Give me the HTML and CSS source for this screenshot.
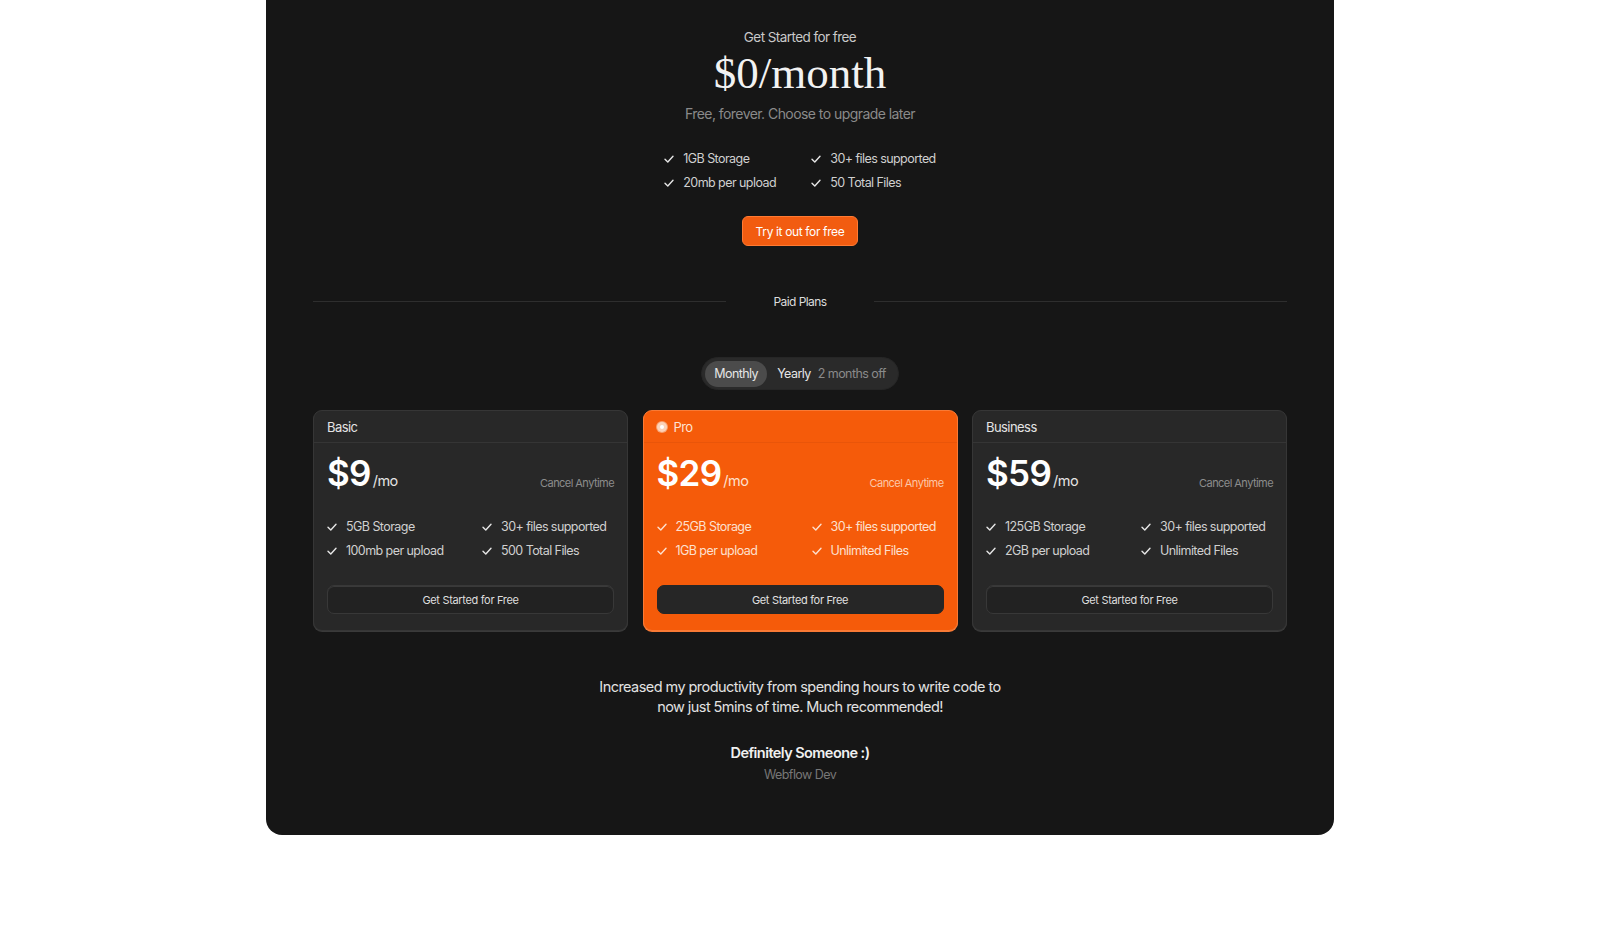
FILE: index.html
```html
<!DOCTYPE html>
<html lang="en">
<head>
<meta charset="utf-8">
<title>Pricing</title>
<link rel="stylesheet" href="styles.css">
</head>
<body>
<main class="panel">
  <section class="hero">
    <p class="eyebrow">Get Started for free</p>
    <h1 class="big-price">$0/month</h1>
    <p class="sub">Free, forever. Choose to upgrade later</p>
    <ul class="features free">
      <li><svg class="chk" viewBox="0 0 10 10"><polyline points="1,5.2 3.8,8 9,2.2"/></svg>1GB Storage</li>
      <li><svg class="chk" viewBox="0 0 10 10"><polyline points="1,5.2 3.8,8 9,2.2"/></svg>30+ files supported</li>
      <li><svg class="chk" viewBox="0 0 10 10"><polyline points="1,5.2 3.8,8 9,2.2"/></svg>20mb per upload</li>
      <li><svg class="chk" viewBox="0 0 10 10"><polyline points="1,5.2 3.8,8 9,2.2"/></svg>50 Total Files</li>
    </ul>
    <button class="cta">Try it out for free</button>
  </section>

  <div class="divider"><span class="line"></span><span class="divider-label">Paid Plans</span><span class="line"></span></div>

  <div class="toggle-wrap">
    <div class="toggle">
      <span class="opt active">Monthly</span>
      <span class="opt">Yearly <span class="muted">2 months off</span></span>
    </div>
  </div>

  <div class="cards">
    <article class="card">
      <header class="card-head">Basic</header>
      <div class="price-row"><span class="amount">$9</span><span class="per">/mo</span><span class="cancel">Cancel Anytime</span></div>
      <ul class="features">
        <li><svg class="chk" viewBox="0 0 10 10"><polyline points="1,5.2 3.8,8 9,2.2"/></svg>5GB Storage</li>
        <li><svg class="chk" viewBox="0 0 10 10"><polyline points="1,5.2 3.8,8 9,2.2"/></svg>30+ files supported</li>
        <li><svg class="chk" viewBox="0 0 10 10"><polyline points="1,5.2 3.8,8 9,2.2"/></svg>100mb per upload</li>
        <li><svg class="chk" viewBox="0 0 10 10"><polyline points="1,5.2 3.8,8 9,2.2"/></svg>500 Total Files</li>
      </ul>
      <button class="card-btn">Get Started for Free</button>
    </article>
    <article class="card pro">
      <header class="card-head"><span class="dot"></span>Pro</header>
      <div class="price-row"><span class="amount">$29</span><span class="per">/mo</span><span class="cancel">Cancel Anytime</span></div>
      <ul class="features">
        <li><svg class="chk" viewBox="0 0 10 10"><polyline points="1,5.2 3.8,8 9,2.2"/></svg>25GB Storage</li>
        <li><svg class="chk" viewBox="0 0 10 10"><polyline points="1,5.2 3.8,8 9,2.2"/></svg>30+ files supported</li>
        <li><svg class="chk" viewBox="0 0 10 10"><polyline points="1,5.2 3.8,8 9,2.2"/></svg>1GB per upload</li>
        <li><svg class="chk" viewBox="0 0 10 10"><polyline points="1,5.2 3.8,8 9,2.2"/></svg>Unlimited Files</li>
      </ul>
      <button class="card-btn">Get Started for Free</button>
    </article>
    <article class="card">
      <header class="card-head">Business</header>
      <div class="price-row"><span class="amount">$59</span><span class="per">/mo</span><span class="cancel">Cancel Anytime</span></div>
      <ul class="features">
        <li><svg class="chk" viewBox="0 0 10 10"><polyline points="1,5.2 3.8,8 9,2.2"/></svg>125GB Storage</li>
        <li><svg class="chk" viewBox="0 0 10 10"><polyline points="1,5.2 3.8,8 9,2.2"/></svg>30+ files supported</li>
        <li><svg class="chk" viewBox="0 0 10 10"><polyline points="1,5.2 3.8,8 9,2.2"/></svg>2GB per upload</li>
        <li><svg class="chk" viewBox="0 0 10 10"><polyline points="1,5.2 3.8,8 9,2.2"/></svg>Unlimited Files</li>
      </ul>
      <button class="card-btn">Get Started for Free</button>
    </article>
  </div>

  <section class="testimonial">
    <p class="quote">Increased my productivity from spending hours to write code to<br>now just 5mins of time. Much recommended!</p>
    <p class="name">Definitely Someone :)</p>
    <p class="role">Webflow Dev</p>
  </section>
</main>
</body>
</html>
```
FILE: styles.css
```css
* { box-sizing: border-box; }
html, body { margin: 0; padding: 0; background: #ffffff; }
body { font-family: Inter, "Liberation Sans", sans-serif; letter-spacing: -0.035em; }
p, h1, ul { margin: 0; padding: 0; }
ul { list-style: none; }

.panel {
  width: 1068px;
  height: 835px;
  margin: 0 auto;
  background: #161616;
  border-radius: 0 0 16px 16px;
  padding: 27px 47px 0;
  color: #e8e8e8;
}

.hero { display: flex; flex-direction: column; align-items: center; }
.eyebrow { font-size: 13.5px; line-height: 20px; color: #c9c9c9; }
.big-price {
  font-family: "Liberation Serif", "DejaVu Serif", serif;
  font-weight: 400;
  font-size: 45px;
  line-height: 52px;
  letter-spacing: 0;
  color: #f2f2f2;
}
.sub { margin-top: 5px; font-size: 14px; line-height: 20px; color: #8a8a8a; }

.features { display: grid; grid-template-columns: 155px 1fr; }
.features li { display: flex; align-items: center; font-size: 12.5px; line-height: 24px; color: #d0d0d0; white-space: nowrap; }
.features.free { margin-top: 23px; grid-template-columns: 147px auto; }
.chk { width: 10px; height: 10px; margin-right: 9px; fill: none; stroke: #e6e6e6; stroke-width: 1.4; stroke-linecap: round; stroke-linejoin: round; }

.cta {
  margin-top: 21px;
  height: 30px;
  width: 116px;
  border: 1px solid #ff7a33;
  border-radius: 6px;
  background: #f25c10;
  color: #fff;
  font-family: inherit;
  font-size: 12px;
  letter-spacing: -0.03em;
}

.divider { margin-top: 45px; height: 20px; display: flex; align-items: center; }
.line { flex: 0 0 413px; height: 1px; background: #2e2e2e; }
.divider-label { flex: 1; text-align: center; font-size: 12px; color: #dcdcdc; }

.toggle-wrap { margin-top: 46px; display: flex; justify-content: center; }
.toggle {
  display: flex;
  align-items: center;
  height: 33px;
  padding: 3px 12px 3px 3px;
  border-radius: 999px;
  background: #2a2a2a;
  border: 1px solid #262626;
}
.opt { font-size: 12.5px; color: #e6e6e6; line-height: 27px; }
.opt.active { width: 62px; height: 26px; text-align: center; border-radius: 999px; background: #4b4b4b; margin-right: 10px; line-height: 26px; }
.muted { color: #8a8a8a; margin-left: 4px; }

.cards { margin-top: 20px; display: grid; grid-template-columns: repeat(3, 315px); justify-content: space-between; }
.card {
  background: #282828;
  border: 1px solid #363636;
  border-radius: 9px;
  padding-bottom: 16px;
  box-shadow: 0 1px 0 #3a3a3a;
}
.card-head {
  height: 32px;
  padding: 0 13px;
  display: flex;
  align-items: center;
  border-bottom: 1px solid #353535;
  font-size: 13px;
  color: #e4e4e4;
}
.price-row { display: flex; align-items: baseline; padding: 8px 13px 0; height: 52px; }
.amount { font-size: 35px; font-weight: 600; line-height: 44px; color: #ffffff; letter-spacing: -0.02em; }
.per { font-size: 14.5px; color: #e4e4e4; margin-left: 2px; }
.cancel { margin-left: auto; font-size: 11px; color: #8c8c8c; position: relative; top: 1px; }
.card .features { margin-top: 20px; padding: 0 13px; }
.card-btn {
  display: block;
  margin: 22px 13px 0;
  width: calc(100% - 26px);
  height: 29px;
  border-radius: 7px;
  border: 1px solid #383838;
  background: #222222;
  color: #dedede;
  font-family: inherit;
  font-size: 11px;
  letter-spacing: -0.03em;
  box-shadow: inset 0 1px 0 #3a3a3a;
}

.card.pro { background: #f55b0a; border-color: #f97a35; box-shadow: 0 1px 0 #f97a35; }
.card.pro .card-head { border-bottom-color: #e95509; color: #fde3d3; }
.card.pro .cancel { color: #fcc7a8; }
.card.pro .features li { color: #fde0cf; }
.card.pro .chk { stroke: #fde0cf; }
.card.pro .per { color: #fde0cf; }
.card.pro .card-btn { background: #262626; border-color: #262626; box-shadow: none; color: #e0e0e0; }
.dot {
  width: 10px; height: 10px; border-radius: 50%;
  background: #fbd2b9; margin-right: 7px;
  display: inline-flex; align-items: center; justify-content: center;
  box-shadow: 0 0 0 1px #f9a170;
}
.dot::after { content: ""; width: 4px; height: 4px; border-radius: 50%; background: #ffffff; }

.testimonial { margin-top: 46px; text-align: center; }
.quote { font-size: 14.5px; line-height: 20px; color: #e2e2e2; }
.name { margin-top: 26px; font-size: 14.5px; line-height: 20px; font-weight: 600; color: #f0f0f0; }
.role { margin-top: 3px; font-size: 12.5px; line-height: 18px; color: #777777; }
```
